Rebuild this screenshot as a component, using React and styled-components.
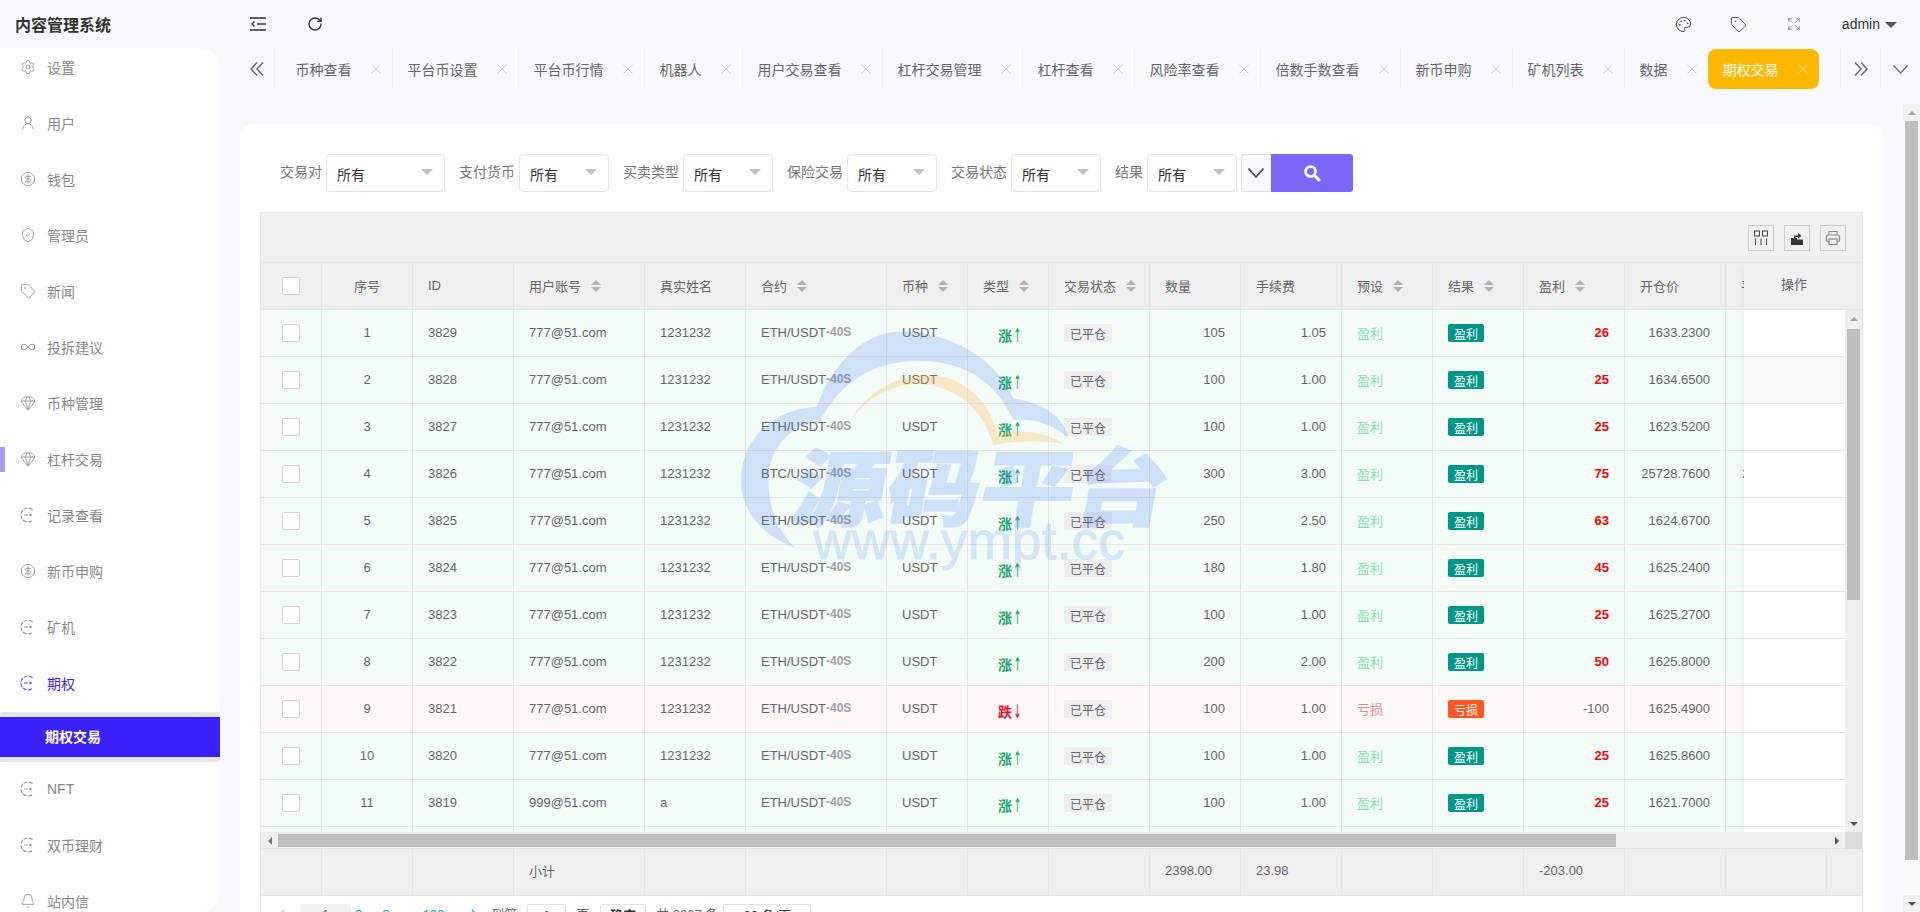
import styled, { createGlobalStyle, css } from "styled-components"
import {
  Bell, CircleDollarSign, Expand, Gem, Infinity as InfinityIcon,
  Palette, RotateCw, Settings, ShieldCheck, Tag, UserRound,
} from "lucide-react"

const FONT = `"Liberation Sans", "Noto Sans CJK SC", sans-serif`

const GlobalStyle = createGlobalStyle`
  * { box-sizing: border-box; }
  html, body { margin: 0; height: 100%; overflow: hidden; }
  body { background: #f8f9fe; font-family: ${FONT}; color: #666; }
`

const Shell = styled.div`
  position: relative;
  width: 1920px;
  height: 912px;
  overflow: hidden;
`

const Header = styled.header`
  display: flex;
  align-items: center;
  height: 48px;
  color: #333;
`

const Logo = styled.div`
  width: 250px;
  padding-left: 15px;
  font-size: 16px;
  font-weight: 700;
  color: #333;
`

const HeaderLeft = styled.div`
  display: flex;
  align-items: center;
  gap: 41px;
  flex: 1;
`

const HeaderRight = styled.div`
  display: flex;
  align-items: center;
  padding-right: 23px;
`

const HeaderIcon = styled.span`
  display: flex;
  margin-right: ${(p) => p.$mr}px;
`

const AdminName = styled.span`
  font-size: 14px;
  color: #333;
`

const AdminCaret = styled.i`
  width: 0;
  height: 0;
  margin-left: 5px;
  margin-top: 1px;
  border: 6px solid transparent;
  border-top: 6px solid #555;
  border-bottom: 0;
`

const Layout = styled.div`
  display: flex;
  height: 864px;
`

const Sidebar = styled.aside`
  width: 220px;
  height: 864px;
  overflow: hidden;
  background: #fff;
  border-radius: 0 20px 20px 0;
`

const MenuList = styled.ul`
  list-style: none;
  margin: -8px 0 0;
  padding: 0;
`

const MenuEntry = styled.li`
  display: contents;
`

const MenuItem = styled.div`
  position: relative;
  display: flex;
  align-items: center;
  gap: 11px;
  height: 56px;
  padding: 0 0 2px 20px;
  font-size: 14px;
  color: ${(p) => (p.$open ? "#3a21f9" : "#888")};

  svg { color: ${(p) => (p.$open ? "#6a5cf7" : "#999")}; flex: none; }

  ${(p) => p.$hover && css`
    &::before {
      content: "";
      position: absolute;
      left: 0;
      top: 15px;
      width: 5px;
      height: 25px;
      background: #a99bf7;
    }
  `}
`

const SubMenu = styled.div`
  padding: 5px 0;
  background: #e4e5ef;
  border-radius: 2px;
`

const SubItem = styled.div`
  display: flex;
  align-items: center;
  height: 40px;
  padding: 0 0 2px 45px;
  font-size: 14px;
  font-weight: 700;
  color: #fff;
  background: #3a21f9;
`

const Main = styled.main`
  display: flex;
  flex-direction: column;
  width: 1700px;
`

const TabBar = styled.div`
  display: flex;
  align-items: center;
  height: 40px;
  margin: 1px 0 15px 20px;
`

const TabArrow = styled.span`
  display: flex;
  align-items: center;
  justify-content: center;
  flex: none;
  width: ${(p) => p.$w}px;
  height: 40px;
  ${(p) => p.$line && "border-left: 1px solid #f0f1f6;"}
`

const TabList = styled.div`
  display: flex;
  flex: none;
  width: 1566px;
  overflow: hidden;
`

const TabItem = styled.div`
  display: flex;
  align-items: center;
  flex: none;
  gap: 19px;
  height: 40px;
  padding: 0 11px 0 ${(p) => (p.$first ? 20.5 : 15)}px;
  font-size: 14px;
  white-space: nowrap;
  color: #666;
  border-left: 1px solid #f0f1f6;

  ${(p) => p.$active && css`
    padding: 0 11px 0 15px;
    color: #fff;
    background: #ffb800;
    border-left: 0;
    border-radius: 8px;
  `}
`

const PageArea = styled.div`
  display: flex;
  height: 808px;
`

const Scroller = styled.div`
  width: 1683px;
  height: 808px;
  padding: 20px 20px 0;
  overflow: hidden;
`

const ScrollTrack = styled.div`
  display: flex;
  flex-direction: ${(p) => (p.$horizontal ? "row" : "column")};
  flex: none;
  background: ${(p) => p.$bg};
  ${(p) => (p.$horizontal ? "height: 17px; border-bottom: 1px solid #e6e6e6;" : "width: 17px;")}
`

const ScrollButton = styled.span`
  display: flex;
  align-items: center;
  justify-content: center;
  flex: none;
  width: 17px;
  height: 17px;
  background: ${(p) => p.$bg || "transparent"};
`

const TriangleMark = styled.i`
  width: 0;
  height: 0;
  border: 4px solid transparent;
  ${(p) => p.$dir === "up" && `border-top: 0; border-bottom: 4.5px solid ${p.$color};`}
  ${(p) => p.$dir === "down" && `border-bottom: 0; border-top: 4.5px solid ${p.$color};`}
  ${(p) => p.$dir === "left" && `border-left: 0; border-right: 4.5px solid ${p.$color};`}
  ${(p) => p.$dir === "right" && `border-right: 0; border-left: 4.5px solid ${p.$color};`}
`

const ScrollThumb = styled.span`
  flex: none;
  background: #bebebe;
  ${(p) => (p.$horizontal
    ? `width: ${p.$size}px; height: 13px; margin-top: 2px;`
    : `width: 13px; height: ${p.$size}px; margin: ${p.$offset || 0}px 2px 0;`)}
`

const ScrollFill = styled.span`
  flex: 1;
`

const Card = styled.section`
  height: 826px;
  padding: 30px 20px 6px;
  background: #fff;
  border-radius: 14px;
`

const SearchForm = styled.form`
  display: flex;
  align-items: center;
  height: 38px;
  margin: 0 0 20px 20px;
`

const FieldGroup = styled.span`
  display: contents;
`

const FieldLabel = styled.label`
  height: 38px;
  margin-right: 4px;
  font-size: 14px;
  line-height: 36px;
  color: #777;
`

const SelectBox = styled.div`
  display: flex;
  align-items: center;
  justify-content: space-between;
  width: ${(p) => p.$w}px;
  height: 38px;
  margin-right: ${(p) => p.$mr}px;
  padding: 1px 11px 0 10px;
  font-size: 14px;
  color: #333;
  background: #fff;
  border: 1px solid #e6e6e6;
  border-radius: 4px;
`

const SelectCaret = styled.i`
  width: 0;
  height: 0;
  margin-top: -3px;
  border: 6px solid transparent;
  border-top: 6px solid #c2c2c2;
  border-bottom: 0;
`

const ExpandButton = styled.button`
  display: flex;
  align-items: center;
  justify-content: center;
  width: 30.5px;
  height: 38px;
  padding: 0;
  background: #f8f9fe;
  border: 1px solid #e0e0e0;
  border-right: 0;
  border-radius: 3px 0 0 3px;
`

const SearchButton = styled.button`
  display: flex;
  align-items: center;
  justify-content: center;
  width: 81.5px;
  height: 38px;
  padding: 0;
  background: #7b68fb;
  border: 0;
  border-radius: 0 3px 3px 0;
`

const TableBox = styled.div`
  border: 1px solid #e6e6e6;
  border-bottom: 0;
`

const Toolbar = styled.div`
  display: flex;
  align-items: center;
  justify-content: flex-end;
  gap: 10px;
  height: 49px;
  padding-right: 16px;
  background: #f0f0f0;
`

const ToolButton = styled.span`
  display: flex;
  align-items: center;
  justify-content: center;
  width: 26px;
  height: 26px;
  border: 1px solid #ccc;
`

const HeadWrap = styled.div`
  position: relative;
  height: 48px;
  overflow: hidden;
  background: #f0f0f0;
  border-top: 1px solid #e6e6e6;
  border-bottom: 1px solid #e6e6e6;
`

const Row = styled.div`
  display: flex;
  width: 1837px;
  height: ${(p) => p.$h || 47}px;
  background: ${(p) => p.$bg || "transparent"};
  ${(p) => p.$line && "border-bottom: 1px solid #e6e6e6;"}
`

const Cell = styled.div`
  display: flex;
  align-items: center;
  justify-content: ${(p) => p.$align || "flex-start"};
  flex: none;
  width: ${(p) => p.$w}px;
  height: 100%;
  padding: 0 15px ${(p) => p.$pb ?? 2}px;
  font-size: 13px;
  white-space: nowrap;
  overflow: hidden;
  color: #666;
  border-right: 1px solid #e6e6e6;
`

const SortMark = styled.span`
  display: flex;
  flex-direction: column;
  gap: 2px;
  margin: 2px 0 0 10px;

  &::before, &::after {
    content: "";
    width: 0;
    height: 0;
    border: 5px solid transparent;
  }
  &::before { border-top: 0; border-bottom: 5.5px solid #b2b2b2; }
  &::after { border-bottom: 0; border-top: 5.5px solid #b2b2b2; }
`

const CheckMark = styled.span`
  width: 18px;
  height: 18px;
  margin-top: 2px;
  background: #fff;
  border: 1px solid #d2d2d2;
  border-radius: 2px;
`

const BodyGrid = styled.div`
  display: grid;
  grid-template-columns: 1584px 17px;
  grid-template-rows: 522px 17px;
`

const Viewport = styled.div`
  position: relative;
  overflow: hidden;
`

const Corner = styled.span`
  background: #dcdcdc;
`

const PairSuffix = styled.span`
  font-size: 12px;
  font-weight: 700;
  color: #a0a0a0;
`

const Direction = styled.span`
  display: inline-flex;
  align-items: center;
  margin-top: 6px;
  font-size: 14px;
  font-weight: 700;
  color: ${(p) => (p.$up ? "#1aa36b" : "#e5122d")};
`

const DirectionArrow = styled.span`
  display: inline-block;
  width: 6px;
  font-family: "DejaVu Sans", sans-serif;
  font-size: 19px;
  font-weight: 400;
  line-height: 16px;
  text-align: center;
  transform: scaleX(0.5);
`

const StatusTag = styled.span`
  display: inline-flex;
  align-items: center;
  justify-content: center;
  width: 48px;
  height: 18px;
  margin-top: 2px;
  font-size: 12px;
  color: #666;
  background: #eee;
  border-radius: 2px;
`

const ResultTag = styled(StatusTag)`
  width: 36px;
  color: #fff;
  background: ${(p) => (p.$win ? "#009688" : "#ff5722")};
`

const PresetText = styled.span`
  color: ${(p) => (p.$win ? "#8adcb2" : "#d98a8a")};
`

const Profit = styled.span`
  color: ${(p) => (p.$win ? "#f00" : "#666")};
  font-weight: ${(p) => (p.$win ? 700 : 400)};
`

const OpColumn = styled.div`
  position: absolute;
  top: 0;
  right: 0;
  bottom: 0;
  width: 101px;
  background: #fff;
  box-shadow: -1px 0 8px rgba(0, 0, 0, 0.07);
`

const OpCell = styled.div`
  height: 47px;
  background: ${(p) => (p.$hover ? "#fafafa" : "#fff")};
  border-bottom: 1px solid #e6e6e6;
`

const OpHead = styled.div`
  position: absolute;
  top: 0;
  right: 0;
  bottom: 0;
  width: 118px;
  padding-left: 37px;
  font-size: 13px;
  line-height: 44px;
  color: #666;
  background: #f0f0f0;
  box-shadow: -1px 0 8px rgba(0, 0, 0, 0.07);
`

const TotalWrap = styled.div`
  height: 47px;
  overflow: hidden;
  background: #f0f0f0;
  border-bottom: 1px solid #e6e6e6;
`

const Pager = styled.div`
  display: flex;
  align-items: flex-start;
  height: 42px;
  padding: 8px 0 0 16px;
  font-size: 13px;
  line-height: 22px;
  white-space: nowrap;
  color: #666;
`

const PagerText = styled.span`
  margin-left: ${(p) => p.$ml || 0}px;
  color: ${(p) => p.$color || "#666"};
`

const PagerArrow = styled.span`
  display: flex;
  flex: none;
  width: ${(p) => p.$w}px;
  margin-left: ${(p) => p.$ml || 0}px;
  padding-top: 5px;
`

const PagerCurrent = styled.span`
  width: 51px;
  height: 30px;
  text-align: center;
  background: #f0f0f0;
  border-radius: 3px;
`

const PagerBox = styled.span`
  flex: none;
  width: ${(p) => p.$w}px;
  height: 30px;
  margin-left: ${(p) => p.$ml}px;
  font-weight: ${(p) => (p.$strong ? 700 : 400)};
  text-align: center;
  color: #333;
  border: 1px solid #e2e2e2;
  border-radius: 2px;
`

const Watermark = styled.svg`
  position: absolute;
  left: 720px;
  top: 320px;
  width: 480px;
  height: 270px;
  pointer-events: none;
`

const columns = [61, 91, 101, 131, 101, 141, 81, 81, 101, 91, 101, 91, 91, 101, 101, 101, 171, 100]

const headers = [
  { label: "序号", align: "center" }, { label: "ID" }, { label: "用户账号", sort: true },
  { label: "真实姓名" }, { label: "合约", sort: true }, { label: "币种", sort: true },
  { label: "类型", sort: true }, { label: "交易状态", sort: true }, { label: "数量" },
  { label: "手续费" }, { label: "预设", sort: true }, { label: "结果", sort: true },
  { label: "盈利", sort: true }, { label: "开仓价" }, { label: "平仓价" }, { label: "开仓时间" }, { label: "操作" },
]

const rawRows = [
  [3829, "ETH", 105, "1.05", 26, "1633.2300", "1635.1800"],
  [3828, "ETH", 100, "1.00", 25, "1634.6500", "1636.2200"],
  [3827, "ETH", 100, "1.00", 25, "1623.5200", "1625.9000"],
  [3826, "BTC", 300, "3.00", 75, "25728.7600", "25731.2200"],
  [3825, "ETH", 250, "2.50", 63, "1624.6700", "1626.1300"],
  [3824, "ETH", 180, "1.80", 45, "1625.2400", "1627.0400"],
  [3823, "ETH", 100, "1.00", 25, "1625.2700", "1626.7700"],
  [3822, "ETH", 200, "2.00", 50, "1625.8000", "1627.2100"],
  [3821, "ETH", 100, "1.00", -100, "1625.4900", "1624.3300"],
  [3820, "ETH", 100, "1.00", 25, "1625.8600", "1627.1500"],
  [3819, "ETH", 100, "1.00", 25, "1621.7000", "1623.4800"],
  [3818, "ETH", 100, "1.00", 25, "1622.1400", "1623.9600"],
]

const menus = [
  { label: "设置", icon: <Settings size={16} strokeWidth={1.4} /> },
  { label: "用户", icon: <UserRound size={16} strokeWidth={1.4} /> },
  { label: "钱包", icon: <CircleDollarSign size={16} strokeWidth={1.4} /> },
  { label: "管理员", icon: <ShieldCheck size={16} strokeWidth={1.4} /> },
  { label: "新闻", icon: <Tag size={16} strokeWidth={1.4} /> },
  { label: "投拆建议", icon: <InfinityIcon size={16} strokeWidth={1.6} /> },
  { label: "币种管理", icon: <Gem size={16} strokeWidth={1.4} /> },
  { label: "杠杆交易", icon: <Gem size={16} strokeWidth={1.4} />, hover: true },
  { label: "记录查看", icon: <CycleIcon /> },
  { label: "新币申购", icon: <CircleDollarSign size={16} strokeWidth={1.4} /> },
  { label: "矿机", icon: <CycleIcon /> },
  { label: "期权", icon: <CycleIcon />, open: true },
  { label: "NFT", icon: <CycleIcon /> },
  { label: "双币理财", icon: <CycleIcon /> },
  { label: "站内信", icon: <Bell size={16} strokeWidth={1.4} /> },
]

const tabs = ["币种查看", "平台币设置", "平台币行情", "机器人", "用户交易查看", "杠杆交易管理", "杠杆查看", "风险率查看", "倍数手数查看", "新币申购", "矿机列表", "数据"]

const fields = [
  { label: "交易对", w: 118.5 }, { label: "支付货币", w: 89.5 }, { label: "买卖类型", w: 89.5 },
  { label: "保险交易", w: 89.5 }, { label: "交易状态", w: 89.5 }, { label: "结果", w: 89.5, last: true },
]

function CycleIcon() {
  return (
    <svg width="16" height="16" viewBox="0 0 16 16" fill="none" stroke="currentColor" strokeWidth="1.2">
      <path d="M12.6 2.8A7 7 0 1 0 12.6 13.2" strokeDasharray="4 1.3" />
      <path d="M4 8h4" />
      <circle cx="10.5" cy="8" r="0.7" fill="currentColor" />
    </svg>
  )
}

function IndentIcon() {
  return (
    <svg width="16" height="16" viewBox="0 0 16 16" fill="none" stroke="#333" strokeWidth="1.6">
      <path d="M0 2h16M0 14h16M7 8h9" />
      <path d="M4.5 5.5 2 8l2.5 2.5" strokeWidth="1.3" />
    </svg>
  )
}

function CloseIcon({ color }) {
  return (
    <svg width="10" height="10" viewBox="0 0 10 10" fill="none" stroke={color} strokeWidth="1">
      <path d="M0.5 0.5l9 9M9.5 0.5l-9 9" />
    </svg>
  )
}

function DoubleChevron({ flip }) {
  return (
    <svg width="14" height="14" viewBox="0 0 14 14" fill="none" stroke="#5d6a85" strokeWidth="1.5" style={flip ? { transform: "scaleX(-1)" } : undefined}>
      <path d="M7 0.5 1 7l6 6.5M13 0.5 7 7l6 6.5" />
    </svg>
  )
}

function DownChevron({ width, height, weight, color }) {
  return (
    <svg width={width} height={height} viewBox={`0 0 ${width} ${height}`} fill="none" stroke={color} strokeWidth={weight}>
      <path d={`M0.5 0.5 ${width / 2} ${height - 1} ${width - 0.5} 0.5`} />
    </svg>
  )
}

function PagerChevron({ flip, color }) {
  return (
    <svg width="8" height="14" viewBox="0 0 8 14" fill="none" stroke={color} strokeWidth="1.2" style={flip ? { transform: "scaleX(-1)" } : undefined}>
      <path d="M7 1 1 7l6 6" />
    </svg>
  )
}

function ColsIcon() {
  return (
    <svg width="16" height="16" viewBox="0 0 16 16" fill="none" stroke="#444" strokeWidth="1">
      <rect x="1.5" y="1" width="5" height="5" />
      <rect x="9.5" y="1" width="5" height="5" />
      <path d="M2.5 8.5V15M8 8.5V15M13.5 8.5V15" />
    </svg>
  )
}

function ExportIcon() {
  return (
    <svg width="16" height="16" viewBox="0 0 16 16" fill="#333">
      <path d="M2 8h6v1.5H14V15H2z" />
      <path d="M5 8V5.5h4V3l3.5 3L9 8.7V7H6.5v1z" />
    </svg>
  )
}

function PrintIcon() {
  return (
    <svg width="16" height="16" viewBox="0 0 16 16" fill="none" stroke="#888" strokeWidth="1.2">
      <path d="M4 5V1.5h8V5" />
      <rect x="1.5" y="5" width="13" height="6.5" rx="1.5" />
      <rect x="4" y="9" width="8" height="5.5" fill="#f0f0f0" />
    </svg>
  )
}

function SearchIcon() {
  return (
    <svg width="18" height="18" viewBox="0 0 18 18" fill="none" stroke="#fff">
      <circle cx="7.5" cy="7.5" r="5" strokeWidth="2.6" />
      <path d="M11.5 11.5 16 16" strokeWidth="3" strokeLinecap="round" />
    </svg>
  )
}

function DataRow({ data, index }) {
  const [id, coin, qty, fee, profit, open, close] = data
  const win = profit > 0
  const account = id === 3819 ? "999@51.com" : "777@51.com"
  const name = id === 3819 ? "a" : "1231232"
  return (
    <Row $line $bg={win ? "#f3fcf7" : "#fdf7f7"}>
      <Cell $w={columns[0]} $align="center"><CheckMark /></Cell>
      <Cell $w={columns[1]} $align="center">{index + 1}</Cell>
      <Cell $w={columns[2]}>{id}</Cell>
      <Cell $w={columns[3]}>{account}</Cell>
      <Cell $w={columns[4]}>{name}</Cell>
      <Cell $w={columns[5]}>{coin}/USDT<PairSuffix>-40S</PairSuffix></Cell>
      <Cell $w={columns[6]}>USDT</Cell>
      <Cell $w={columns[7]} $align="center">
        <Direction $up={win}>{win ? "涨" : "跌"}<DirectionArrow>{win ? "↑" : "↓"}</DirectionArrow></Direction>
      </Cell>
      <Cell $w={columns[8]}><StatusTag>已平仓</StatusTag></Cell>
      <Cell $w={columns[9]} $align="flex-end">{qty}</Cell>
      <Cell $w={columns[10]} $align="flex-end">{fee}</Cell>
      <Cell $w={columns[11]}><PresetText $win={win}>{win ? "盈利" : "亏损"}</PresetText></Cell>
      <Cell $w={columns[12]}><ResultTag $win={win}>{win ? "盈利" : "亏损"}</ResultTag></Cell>
      <Cell $w={columns[13]} $align="flex-end"><Profit $win={win}>{profit}</Profit></Cell>
      <Cell $w={columns[14]} $align="flex-end">{open}</Cell>
      <Cell $w={columns[15]} $align="flex-end">{close}</Cell>
      <Cell $w={columns[16]} />
      <Cell $w={columns[17]} />
    </Row>
  )
}

export default function App() {
  const totals = { 3: "小计", 9: "2398.00", 10: "23.98", 13: "-203.00" }
  return (
    <Shell>
      <GlobalStyle />
      <Header>
        <Logo>内容管理系统</Logo>
        <HeaderLeft>
          <IndentIcon />
          <RotateCw size={16} strokeWidth={2} color="#333" />
        </HeaderLeft>
        <HeaderRight>
          <HeaderIcon $mr={38}><Palette size={17} strokeWidth={1.4} color="#444" /></HeaderIcon>
          <HeaderIcon $mr={40}><Tag size={17} strokeWidth={1.4} color="#555" /></HeaderIcon>
          <HeaderIcon $mr={41}><Expand size={14} strokeWidth={1.3} color="#777" /></HeaderIcon>
          <AdminName>admin</AdminName>
          <AdminCaret />
        </HeaderRight>
      </Header>
      <Layout>
        <Sidebar>
          <MenuList>
            {menus.map((menu) => (
              <MenuEntry key={menu.label}>
                <MenuItem $open={menu.open} $hover={menu.hover}>
                  {menu.icon}
                  {menu.label}
                </MenuItem>
                {menu.open && <SubMenu><SubItem>期权交易</SubItem></SubMenu>}
              </MenuEntry>
            ))}
          </MenuList>
        </Sidebar>
        <Main>
          <TabBar>
            <TabArrow $w={34}><DoubleChevron /></TabArrow>
            <TabList>
              {tabs.map((tab, i) => (
                <TabItem key={tab} $first={i === 0}>
                  {tab}
                  <CloseIcon color="#d2d2d2" />
                </TabItem>
              ))}
              <TabItem $active>
                期权交易
                <CloseIcon color="#ffdd8a" />
              </TabItem>
            </TabList>
            <TabArrow $w={40} $line><DoubleChevron flip /></TabArrow>
            <TabArrow $w={40} $line><DownChevron width={15} height={9} weight={1.2} color="#5d6a85" /></TabArrow>
          </TabBar>
          <PageArea>
            <Scroller>
              <Card>
                <SearchForm>
                  {fields.map((field) => (
                    <FieldGroup key={field.label}>
                      <FieldLabel>{field.label}</FieldLabel>
                      <SelectBox $w={field.w} $mr={field.last ? 4 : 14.5}>
                        所有
                        <SelectCaret />
                      </SelectBox>
                    </FieldGroup>
                  ))}
                  <ExpandButton type="button"><DownChevron width={16} height={10} weight={1.8} color="#555" /></ExpandButton>
                  <SearchButton type="button"><SearchIcon /></SearchButton>
                </SearchForm>
                <TableBox>
                  <Toolbar>
                    <ToolButton><ColsIcon /></ToolButton>
                    <ToolButton><ExportIcon /></ToolButton>
                    <ToolButton><PrintIcon /></ToolButton>
                  </Toolbar>
                  <HeadWrap>
                    <Row $h={46}>
                      <Cell $w={columns[0]} $align="center"><CheckMark /></Cell>
                      {headers.map((head, i) => (
                        <Cell key={head.label} $w={columns[i + 1]} $align={head.align}>
                          {head.label}
                          {head.sort && <SortMark />}
                        </Cell>
                      ))}
                    </Row>
                    <OpHead>操作</OpHead>
                  </HeadWrap>
                  <BodyGrid>
                    <Viewport>
                      {rawRows.map((row, i) => (
                        <DataRow key={row[0]} data={row} index={i} />
                      ))}
                      <OpColumn>
                        {rawRows.map((row, i) => (
                          <OpCell key={row[0]} $hover={i === 1} />
                        ))}
                      </OpColumn>
                    </Viewport>
                    <ScrollTrack $bg="#efefef">
                      <ScrollButton><TriangleMark $dir="up" $color="#a3a3a3" /></ScrollButton>
                      <ScrollThumb $size={271} $offset={2} />
                      <ScrollFill />
                      <ScrollButton><TriangleMark $dir="down" $color="#505050" /></ScrollButton>
                    </ScrollTrack>
                    <ScrollTrack $horizontal $bg="#efefef">
                      <ScrollButton><TriangleMark $dir="left" $color="#777" /></ScrollButton>
                      <ScrollThumb $horizontal $size={1338} />
                      <ScrollFill />
                      <ScrollButton><TriangleMark $dir="right" $color="#505050" /></ScrollButton>
                    </ScrollTrack>
                    <Corner />
                  </BodyGrid>
                  <TotalWrap>
                    <Row $h={46}>
                      {columns.map((w, i) => (
                        <Cell key={i} $w={w} $pb={4}>{totals[i]}</Cell>
                      ))}
                    </Row>
                  </TotalWrap>
                  <Pager>
                    <PagerArrow $w={23}><PagerChevron color="#bbb" /></PagerArrow>
                    <PagerCurrent>1</PagerCurrent>
                    <PagerText $ml={4} $color="#00a2e8">2</PagerText>
                    <PagerText $ml={20} $color="#00a2e8">3</PagerText>
                    <PagerText $ml={9}>…</PagerText>
                    <PagerText $ml={11} $color="#00a2e8">100</PagerText>
                    <PagerArrow $w={20} $ml={27}><PagerChevron flip color="#00a2e8" /></PagerArrow>
                    到第
                    <PagerBox $w={39} $ml={10}>1</PagerBox>
                    <PagerText $ml={10}>页</PagerText>
                    <PagerBox $w={46} $ml={11} $strong>确定</PagerBox>
                    <PagerText $ml={10}>共 3307 条</PagerText>
                    <PagerBox $w={88} $ml={5}>20 条/页</PagerBox>
                  </Pager>
                </TableBox>
              </Card>
            </Scroller>
            <ScrollTrack $bg="#fafafa">
              <ScrollButton $bg="#f1f1f1"><TriangleMark $dir="up" $color="#a3a3a3" /></ScrollButton>
              <ScrollThumb $size={739} />
              <ScrollFill />
              <ScrollButton $bg="#f1f1f1"><TriangleMark $dir="down" $color="#505050" /></ScrollButton>
            </ScrollTrack>
          </PageArea>
        </Main>
      </Layout>
      <Watermark viewBox="0 0 1440 810">
        <path
          fill="#3c7afc"
          fillOpacity="0.2"
          d="M225 683C110 640 63 560 63 480C63 350 170 265 290 260C340 120 440 35 540 35C700 35 830 120 880 235C980 250 1035 300 1045 355C1000 310 940 295 880 300C820 170 720 125 600 122C470 122 360 180 300 305C210 310 145 390 145 480C145 570 180 640 225 683Z"
        />
        <path
          fill="#ffb95a"
          fillOpacity="0.3"
          d="M390 305C440 210 540 165 620 165C730 165 805 240 832 340C910 325 985 340 1035 372C960 360 890 362 820 375C790 260 700 198 600 192C510 190 440 235 390 305Z"
        />
        <g opacity="0.2" fill="#3c7afc" stroke="#3c7afc" transform="skewX(-10)">
          <text x="312" y="596" fontFamily="Noto Sans CJK SC, sans-serif" fontSize="250" fontWeight="900" strokeWidth="5" textLength="1125" lengthAdjust="spacingAndGlyphs">源码平台</text>
        </g>
        <g opacity="0.17" fill="#3c7afc" stroke="#3c7afc">
          <text x="280" y="716" fontFamily="Liberation Sans, sans-serif" fontSize="159" strokeWidth="3" textLength="935">www.ympt.cc</text>
        </g>
      </Watermark>
    </Shell>
  )
}
